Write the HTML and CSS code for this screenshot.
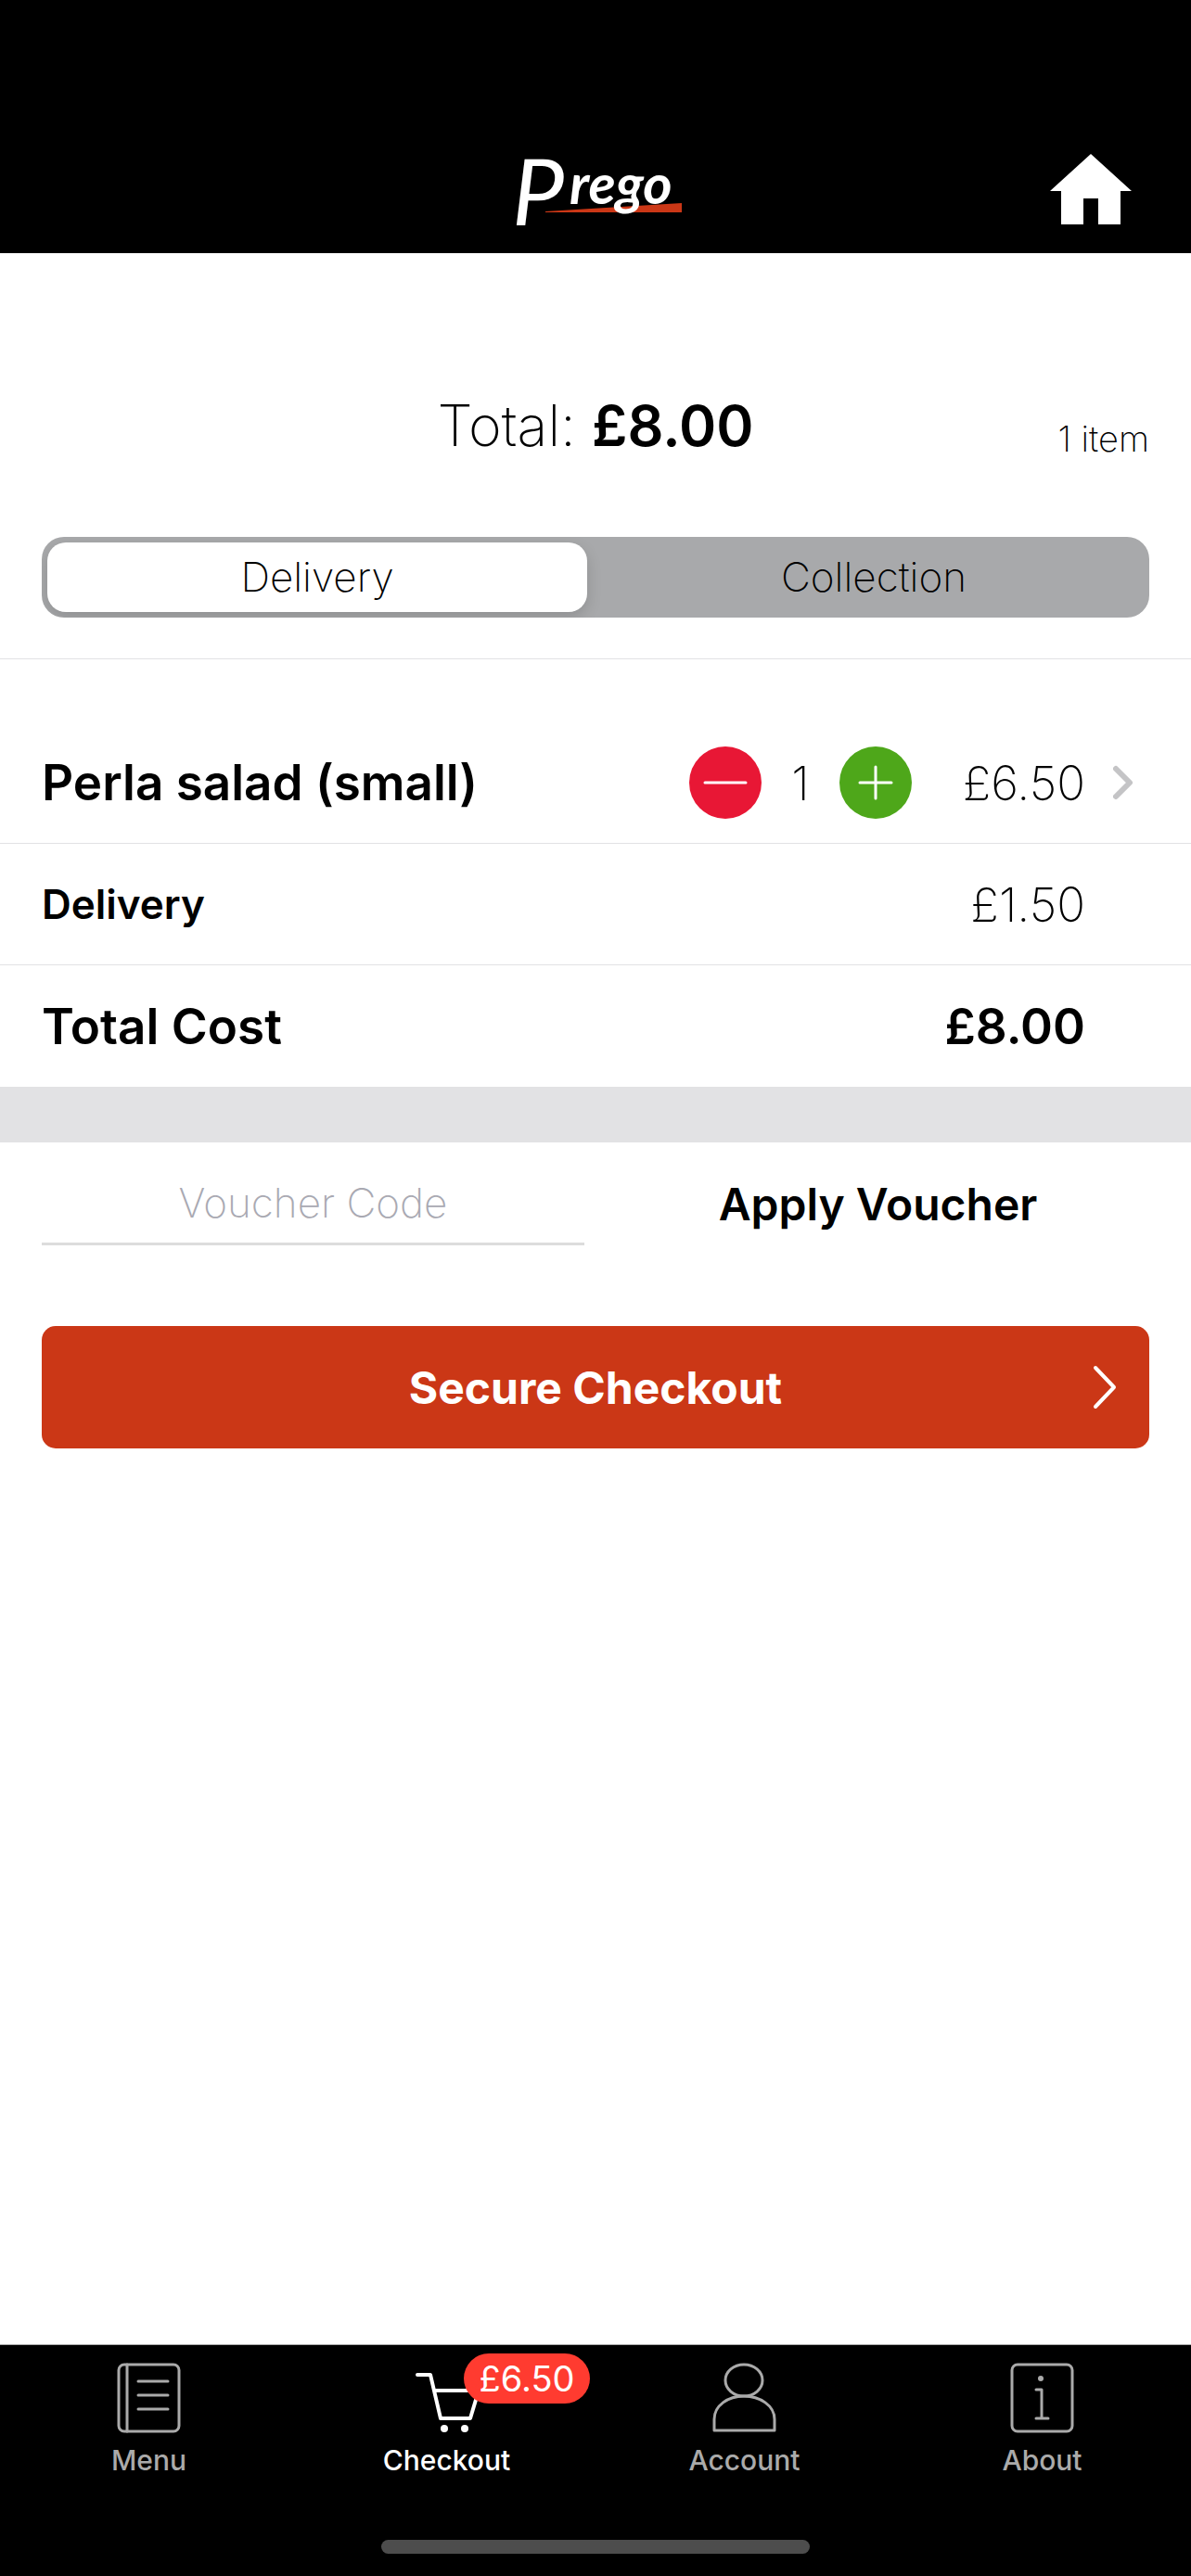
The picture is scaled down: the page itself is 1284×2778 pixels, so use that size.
FILE: index.html
```html
<!DOCTYPE html>
<html lang="en">
<head>
    <meta charset="UTF-8">
    <meta name="viewport" content="width=device-width, initial-scale=1.0">
    <title>Prego - Checkout</title>
    <link rel="stylesheet" href="styles.css">
</head>
<body>
    <header class="top-bar">
        <svg class="logo" viewBox="0 0 188 88" role="img" aria-label="Prego">
            <polygon points="40,62 187,53 187,63 40,63" fill="#cb3716"/>
            <text class="logo-initial" x="4" y="77">P</text>
            <text class="logo-rest" x="66" y="54">rego</text>
        </svg>
        <a href="#" class="home-link" aria-label="Home">
            <svg viewBox="0 0 88 76" width="88" height="76">
                <path d="M44 0L88 40H76V76H52V48H36V76H12V40H0Z" fill="#fff"/>
            </svg>
        </a>
    </header>

    <main>
        <div class="summary">
            <h1>Total: <strong>£8.00</strong></h1>
            <span class="item-count">1 item</span>
        </div>

        <div class="order-type">
            <input type="radio" name="order-type" id="delivery" checked>
            <label for="delivery">Delivery</label>
            <input type="radio" name="order-type" id="collection">
            <label for="collection">Collection</label>
        </div>

        <ul class="basket">
            <li>
                <span class="name">Perla salad (small)</span>
                <div class="quantity">
                    <button type="button" class="minus" aria-label="Remove one">
                        <svg viewBox="0 0 78 78" width="78" height="78"><path d="M17 39H61"/></svg>
                    </button>
                    <span>1</span>
                    <button type="button" class="plus" aria-label="Add one">
                        <svg viewBox="0 0 78 78" width="78" height="78"><path d="M22 39H56M39 22V56"/></svg>
                    </button>
                </div>
                <span class="price">£6.50</span>
                <a href="#" class="details" aria-label="Edit Perla salad">
                    <svg viewBox="0 0 22 38" width="22" height="38"><path d="M3 4L18 19L3 34"/></svg>
                </a>
            </li>
            <li class="fee">
                <span class="name">Delivery</span>
                <span class="price">£1.50</span>
            </li>
            <li class="total">
                <span class="name">Total Cost</span>
                <span class="price">£8.00</span>
            </li>
        </ul>

        <form class="voucher">
            <input type="text" placeholder="Voucher Code" aria-label="Voucher Code">
            <button type="button">Apply Voucher</button>
        </form>

        <button type="button" class="checkout-btn">
            <span>Secure Checkout</span>
            <svg viewBox="0 0 26 48" width="26" height="48"><path d="M3 3L23 24L3 45"/></svg>
        </button>
    </main>

    <nav class="tab-bar">
        <div class="tabs">
            <a href="#">
                <svg viewBox="0 0 69 76" width="69" height="76">
                    <rect x="2" y="2" width="65" height="72" rx="6"/>
                    <path d="M11 2V74M23 20H55M23 35H55M23 50H55"/>
                </svg>
                <span>Menu</span>
            </a>
            <a href="#" class="active">
                <span class="cart">
                    <svg viewBox="0 0 70 76" width="70" height="76">
                        <path d="M3 13H17L28 60H60L69 30H21" stroke-width="4"/>
                        <circle cx="32" cy="71" r="4" class="wheel"/>
                        <circle cx="54" cy="71" r="4" class="wheel"/>
                    </svg>
                    <span class="badge">£6.50</span>
                </span>
                <span>Checkout</span>
            </a>
            <a href="#">
                <svg viewBox="0 0 69 76" width="69" height="76">
                    <ellipse cx="34" cy="19" rx="20" ry="17"/>
                    <path d="M2 73V61C2 46 17 36 34 36S67 46 67 61V73Z"/>
                </svg>
                <span>Account</span>
            </a>
            <a href="#">
                <svg viewBox="0 0 69 76" width="69" height="76">
                    <rect x="2" y="2" width="65" height="72" rx="6"/>
                    <circle cx="33" cy="17" r="3" class="dot"/>
                    <path d="M28 29H34V60M28 60H41"/>
                </svg>
                <span>About</span>
            </a>
        </div>
        <div class="home-indicator"></div>
    </nav>
</body>
</html>
```

FILE: styles.css
```css
* {
    box-sizing: border-box;
}

body {
    font-family: Inter, "Open Sans", sans-serif;
    font-weight: 200;
    background-color: #fff;
    color: #000;
    margin: 0;
    display: flex;
    flex-direction: column;
    min-height: 100vh;
}

button {
    font-family: inherit;
    border: none;
    padding: 0;
    background: none;
    color: inherit;
    cursor: pointer;
}

svg {
    display: block;
}

/* Header */
.top-bar {
    display: grid;
    grid-template-columns: 1fr auto 1fr;
    align-items: end;
    height: 273px;
    padding: 0 64px 19px;
    background-color: #000;
}

.logo {
    grid-column: 2;
    width: 188px;
    height: 88px;
    overflow: visible;
}

.logo text {
    fill: #fff;
    font-family: Lato, sans-serif;
    font-style: italic;
}

.logo .logo-initial {
    font-size: 100px;
    font-weight: 400;
}

.logo .logo-rest {
    font-size: 60px;
    font-weight: 700;
}

.home-link {
    justify-self: end;
    padding-bottom: 12px;
}

/* Order summary */
.summary {
    display: grid;
    grid-template-columns: 1fr auto 1fr;
    align-items: end;
    padding: 150px 45px 84px;
}

h1 {
    grid-column: 2;
    margin: 0;
    font-size: 61px;
    line-height: 72px;
    font-weight: 200;
}

h1 strong {
    font-weight: 600;
}

.item-count {
    justify-self: end;
    font-size: 38px;
    line-height: 44px;
}

.order-type {
    display: flex;
    gap: 18px;
    height: 87px;
    margin: 0 45px 44px;
    padding: 6px;
    border-radius: 24px;
    background-color: #a8a9ab;
    overflow: hidden;
}

.order-type input {
    position: absolute;
    opacity: 0;
}

.order-type label {
    flex: 1;
    border-radius: 20px;
    font-size: 44px;
    line-height: 75px;
    text-align: center;
    cursor: pointer;
}

.order-type input:checked + label {
    background-color: #fff;
    box-shadow: 0 6px 16px rgba(0, 0, 0, 0.15);
}

/* Basket */
.basket {
    list-style: none;
    margin: 0;
    padding: 68px 0 0;
    border-top: 1px solid #e2e2e4;
    border-bottom: 60px solid #e2e2e4;
}

.basket li {
    display: grid;
    grid-template-columns: 1fr 240px 187px 69px;
    align-items: center;
    height: 131px;
    padding: 0 45px;
    border-bottom: 1px solid #e2e2e4;
}

.basket li:last-child {
    border-bottom: none;
}

.basket .name {
    font-size: 53px;
    font-weight: 600;
}

.basket .fee .name {
    font-size: 44px;
}

.basket .price {
    grid-column: 3;
    font-size: 51px;
    text-align: right;
}

.basket .total .price {
    font-size: 53px;
    font-weight: 600;
}

.quantity {
    display: flex;
    justify-content: space-between;
    align-items: center;
    font-size: 51px;
}

.quantity button {
    border-radius: 50%;
}

.quantity path {
    stroke: #fff;
    stroke-width: 3;
    stroke-linecap: round;
}

.minus {
    background-color: #e81735;
}

.plus {
    background-color: #4ea71a;
}

.details {
    justify-self: end;
    padding-right: 17px;
}

.details path {
    fill: none;
    stroke: #c4c4c6;
    stroke-width: 6;
    stroke-linecap: round;
    stroke-linejoin: round;
}

/* Voucher */
.voucher {
    display: grid;
    grid-template-columns: 1fr 1fr;
    gap: 24px;
    padding: 21px 45px 87px;
}

.voucher input {
    width: 100%;
    height: 90px;
    padding: 0;
    border: none;
    border-bottom: 3px solid #dcdcdc;
    background: none;
    font-family: inherit;
    font-size: 44px;
    font-weight: 200;
    text-align: center;
}

.voucher input::placeholder {
    color: #a9a9b2;
    opacity: 1;
}

.voucher button {
    font-size: 48px;
    font-weight: 600;
}

.checkout-btn {
    display: grid;
    grid-template-columns: 1fr auto 1fr;
    align-items: center;
    width: calc(100% - 90px);
    height: 132px;
    margin: 0 45px;
    padding: 0 35px;
    border-radius: 15px;
    background-color: #cb3716;
    color: #fff;
    font-size: 48px;
    font-weight: 700;
}

.checkout-btn span {
    grid-column: 2;
}

.checkout-btn svg {
    justify-self: end;
}

.checkout-btn path {
    fill: none;
    stroke: #fff;
    stroke-width: 4;
    stroke-linecap: round;
    stroke-linejoin: round;
}

/* Bottom tabs */
.tab-bar {
    margin-top: auto;
    padding-bottom: 24px;
    border-top: 1px solid #aaa;
    background-color: #000;
}

.tabs {
    display: grid;
    grid-template-columns: repeat(4, 1fr);
    padding-top: 19px;
}

.tabs a {
    display: flex;
    flex-direction: column;
    align-items: center;
    gap: 11px;
    color: #aaa;
    font-size: 30px;
    line-height: 36px;
    font-weight: 500;
    text-decoration: none;
}

.tabs a.active {
    color: #fff;
}

.tabs svg {
    fill: none;
    stroke: currentColor;
    stroke-width: 3;
    stroke-linecap: round;
    stroke-linejoin: round;
}

.tabs .wheel,
.tabs .dot {
    fill: currentColor;
    stroke: none;
}

.cart {
    position: relative;
}

.badge {
    position: absolute;
    top: -10px;
    left: 53px;
    padding: 0 17px;
    border-radius: 27px;
    background-color: #ff3b30;
    color: #fff;
    font-size: 38px;
    line-height: 54px;
    font-weight: 400;
}

.home-indicator {
    width: 36%;
    height: 15px;
    margin: 68px auto 0;
    border-radius: 8px;
    background-color: #4d4d4d;
}
```
